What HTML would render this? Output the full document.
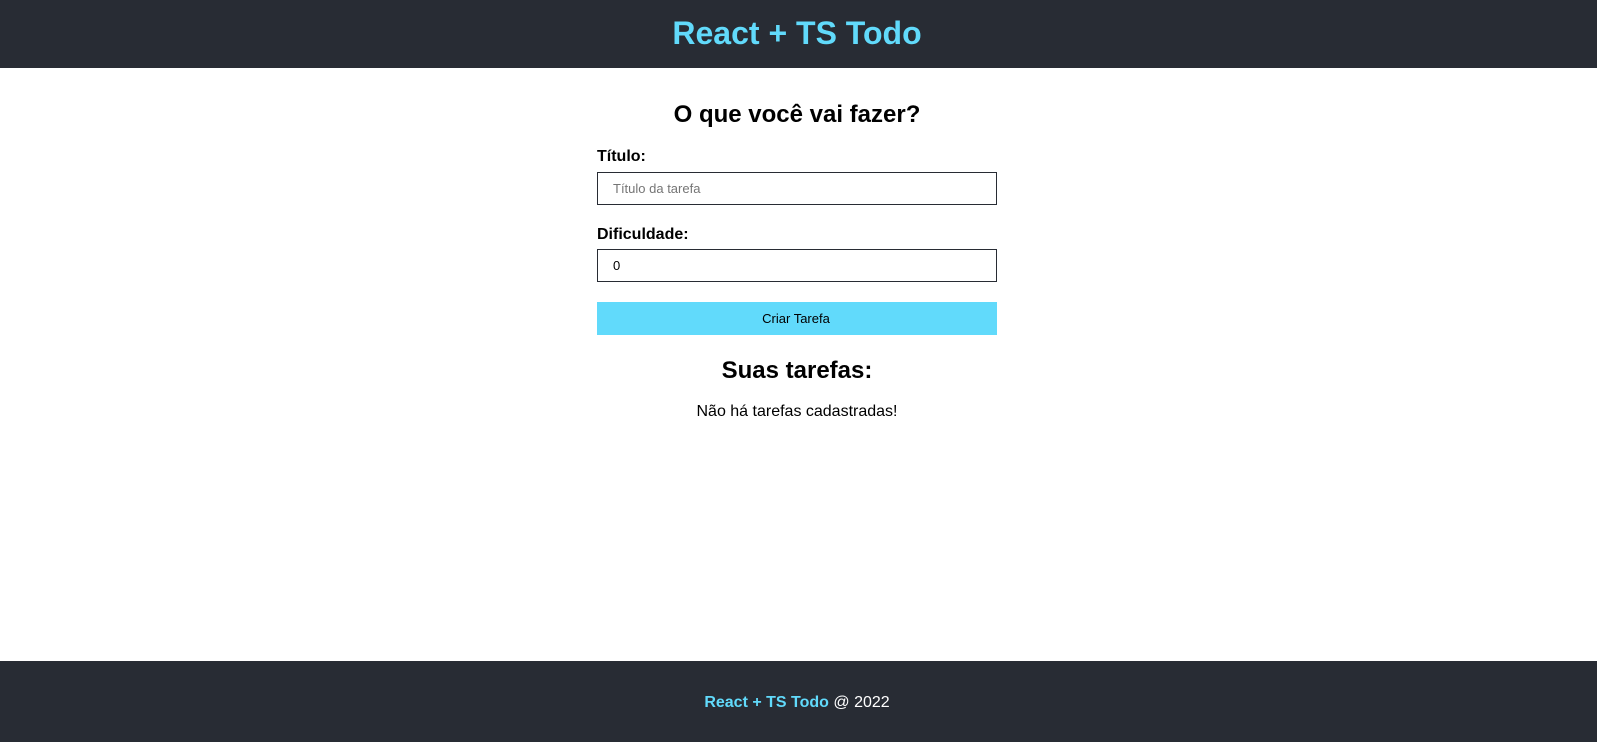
<!DOCTYPE html>
<html style="background:#282c34"><head><meta charset="utf-8"><style>
*{box-sizing:border-box;margin:0;padding:0}
html,body{overflow:hidden}
body{width:1597px;height:742px;font-family:"Liberation Sans",Arial,sans-serif;background:#fff;position:relative}
header{position:absolute;left:0;top:0;width:1597px;height:68px;background:#282c34}
header h1{color:#61dafb;font-size:32px;line-height:66px;font-weight:bold;width:1594px;text-align:center}
footer{position:absolute;left:0;top:661px;bottom:-10px;width:1597px;background:#282c34;color:#fff;font-size:16px}
footer div{width:1594px;text-align:center;line-height:84px}
footer b{color:#61dafb}
.a{position:absolute;left:0;width:1594px;text-align:center;font-weight:bold}
label{position:absolute;left:597px;font-weight:bold;font-size:16px}
.in{position:absolute;left:597px;width:400px;height:33px;border:1px solid #282c34;font-size:13px;padding-left:15px;line-height:31px}
.btn{position:absolute;left:597px;top:302px;width:400px;height:33px;background:#61dafb;font-size:13px;text-align:center;line-height:33px}
</style></head><body>
<header><h1>React + TS Todo</h1></header>
<div class="a" style="top:101px;font-size:24px">O que você vai fazer?</div>
<label style="top:148px">Título:</label>
<div class="in" style="top:172px;color:#757575">Título da tarefa</div>
<label style="top:226px">Dificuldade:</label>
<div class="in" style="top:249px">0</div>
<div class="btn" style="padding-right:2px">Criar Tarefa</div>
<div class="a" style="top:357px;font-size:24px">Suas tarefas:</div>
<div class="a" style="top:403px;font-size:16px;font-weight:normal">Não há tarefas cadastradas!</div>
<footer><div><b>React + TS Todo</b> @ 2022</div></footer>
</body></html>
